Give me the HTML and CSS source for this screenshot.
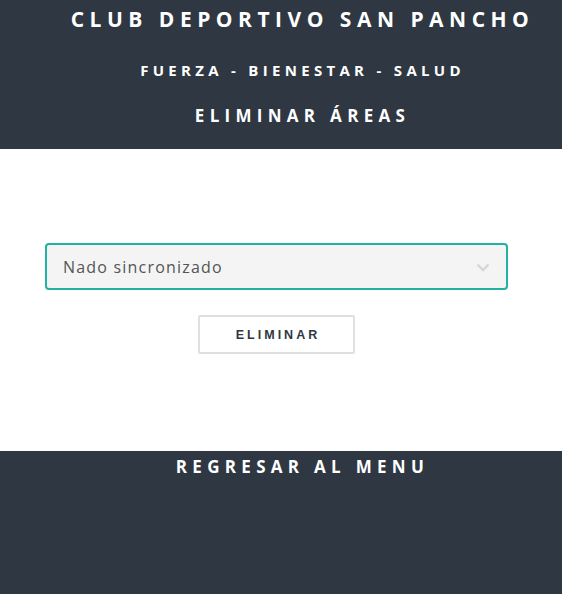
FILE: index.html
```html
<!DOCTYPE html>
<html lang="es">
<head>
<meta charset="utf-8">
<title>Eliminar Áreas</title>
<link rel="stylesheet" href="styles.css">
</head>
<body>
<header class="header">
  <h1 class="title">CLUB DEPORTIVO SAN PANCHO</h1>
  <h2 class="subtitle">FUERZA - BIENESTAR - SALUD</h2>
  <h3 class="section">ELIMINAR ÁREAS</h3>
</header>
<main class="content">
  <form class="form">
    <div class="select-wrap">
      <select class="select">
        <option>Nado sincronizado</option>
      </select>
      <svg class="chevron" width="14" height="9" viewBox="0 0 14 9"><path d="M1.5 1.5 L7 7 L12.5 1.5" fill="none" stroke="#d6d6d6" stroke-width="2.4"/></svg>
    </div>
    <button type="button" class="btn">ELIMINAR</button>
  </form>
</main>
<footer class="footer">
  <a class="back" href="#">REGRESAR AL MENU</a>
</footer>
</body>
</html>
```
FILE: styles.css
```css
html, body { margin: 0; padding: 0; }
body {
  font-family: "Open Sans", "Liberation Sans", sans-serif;
  background: #2e3742;
  width: 562px;
}
.header {
  background: #2e3742;
  color: #fff;
  text-align: center;
  height: 149px;
  box-sizing: border-box;
  padding: 5px 0 0 43px;
}
.title {
  margin: 0;
  font-size: 21px;
  font-weight: 700;
  letter-spacing: 5.5px;
  line-height: 28px;
}
.subtitle {
  margin: 27px 0 0;
  font-size: 15px;
  font-weight: 700;
  letter-spacing: 4.3px;
  line-height: 20px;
}
.section {
  margin: 24px 0 0;
  font-size: 17px;
  font-weight: 700;
  letter-spacing: 5.3px;
  line-height: 24px;
}
.content {
  background: #fff;
  height: 302px;
  box-sizing: border-box;
  padding: 94px 9px 0 0;
}
.form {
  display: flex;
  flex-direction: column;
  align-items: center;
}
.select-wrap {
  position: relative;
  width: 463px;
}
.select {
  appearance: none;
  -webkit-appearance: none;
  width: 100%;
  height: 47px;
  box-sizing: border-box;
  border: 2px solid #20b2a2;
  border-radius: 4px;
  background: #f4f4f4;
  padding: 0 16px;
  font-family: "Open Sans", sans-serif;
  font-size: 16px;
  letter-spacing: 1.2px;
  color: #555;
  outline: none;
}
.chevron {
  position: absolute;
  right: 18px;
  top: 20px;
}
.btn {
  margin-top: 25px;
  width: 157px;
  height: 39px;
  background: #fff;
  border: 2px solid #e0e0e0;
  border-radius: 2px;
  font-family: "Liberation Sans", Arial, sans-serif;
  font-size: 12.5px;
  font-weight: 700;
  letter-spacing: 3px;
  color: #2e3742;
  padding: 0 0 0 3px;
}
.footer {
  background: #2e3742;
  height: 143px;
  text-align: center;
  padding: 4px 0 0 43px;
  box-sizing: border-box;
}
.back {
  color: #fff;
  text-decoration: none;
  font-size: 17px;
  font-weight: 700;
  letter-spacing: 5.3px;
  line-height: 24px;
}
```
